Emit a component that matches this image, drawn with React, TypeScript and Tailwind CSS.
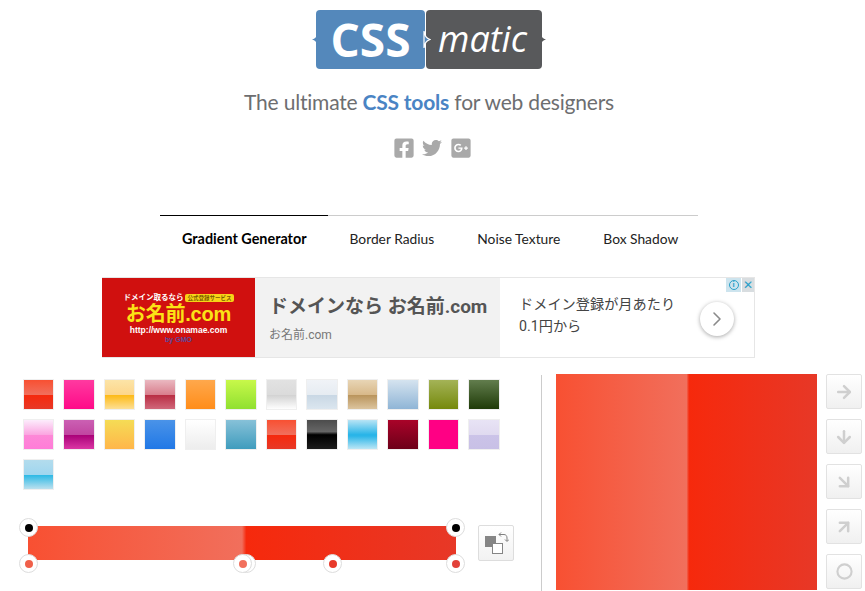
import React from "react";
import { ArrowDownRight, ArrowDown, ArrowRight, ArrowUpRight, ChevronRight, Circle } from "lucide-react";
import { FaFacebookSquare, FaGooglePlusSquare, FaTwitter } from "react-icons/fa";

const swatches = [
  "bg-[linear-gradient(to_bottom,#f85032_0%,#f16f5c_50%,#f6290c_51%,#f02f17_71%,#e73827_100%)]",
  "bg-[linear-gradient(to_bottom,#ff3aa0_0%,#ff0a88_100%)]",
  "bg-[linear-gradient(to_bottom,#fce4a7_0%,#fdd68b_50%,#fdb913_51%,#fddf94_100%)]",
  "bg-[linear-gradient(to_bottom,#eab8c0_0%,#d97f8e_50%,#b82c42_51%,#d0677a_100%)]",
  "bg-[linear-gradient(to_bottom,#ffa84c_0%,#ff8d1a_100%)]",
  "bg-[linear-gradient(to_bottom,#c8f84a_0%,#90e030_100%)]",
  "bg-[linear-gradient(to_bottom,#e2e2e2_0%,#dbdbdb_50%,#d1d1d1_51%,#fefefe_100%)]",
  "bg-[linear-gradient(to_bottom,#f0f3f7_0%,#e6ecf2_50%,#c8d7e4_51%,#dbe6ef_100%)]",
  "bg-[linear-gradient(to_bottom,#e8d5b5_0%,#d8b98a_50%,#b8935a_51%,#dcc49e_100%)]",
  "bg-[linear-gradient(to_bottom,#d5e3ef_0%,#8fb5d6_100%)]",
  "bg-[linear-gradient(to_bottom,#a4b357_0%,#75890c_100%)]",
  "bg-[linear-gradient(to_bottom,#627d4d_0%,#1f3b08_100%)]",
  "bg-[linear-gradient(to_bottom,#fcecfc_0%,#fba6e1_50%,#fd89d7_51%,#ff7cd8_100%)]",
  "bg-[linear-gradient(to_bottom,#cb60b3_0%,#c146a1_50%,#a80077_51%,#db36a4_100%)]",
  "bg-[linear-gradient(to_bottom,#f5dc55_0%,#ffb64a_100%)]",
  "bg-[linear-gradient(to_bottom,#4a93e8_0%,#2178e6_100%)]",
  "bg-[linear-gradient(to_bottom,#ffffff_0%,#ededed_100%)]",
  "bg-[linear-gradient(to_bottom,#87c1d8_0%,#3f9cbd_100%)]",
  "bg-[linear-gradient(to_bottom,#f85032_0%,#f16f5c_50%,#f6290c_51%,#f02f17_71%,#e73827_100%)]",
  "bg-[linear-gradient(to_bottom,#4c4c4c_0%,#666666_40%,#000000_51%,#1c1c1c_100%)]",
  "bg-[linear-gradient(to_bottom,#b8e4f5_0%,#2ab5e8_50%,#2ab5e8_55%,#bce6f5_100%)]",
  "bg-[linear-gradient(to_bottom,#a90329_0%,#6d0019_100%)]",
  "bg-[#ff0084]",
  "bg-[linear-gradient(to_bottom,#e8e3f5_0%,#e0daf0_50%,#cbc3e8_51%,#c8c0e6_100%)]",
  "bg-[linear-gradient(to_bottom,#b3dced_0%,#a0d6ef_50%,#29b8e5_51%,#bce0ee_100%)]",
];

const directions = [ArrowRight, ArrowDown, ArrowDownRight, ArrowUpRight, Circle];

const Handle = ({ className, dot }: { className: string; dot: string }) => (
  <div className={`absolute w-[19px] h-[19px] rounded-full bg-white border border-[#ddd] flex items-center justify-center ${className}`}>
    <div className={`w-[8px] h-[8px] rounded-full ${dot}`}></div>
  </div>
);

const Logo = () => (
  <div className="relative mr-[7px] flex h-[59px] w-[226px]">
    <div className="w-[109px] bg-[#5488bb] rounded-[4px] flex items-center justify-center text-white text-[46px] font-bold font-['Open_Sans',sans-serif]">
      CSS
    </div>
    <div className="ml-px w-[116px] bg-[#58595b] rounded-[4px] pl-[12px] pb-[2px] flex items-center text-white text-[36px] italic font-['Open_Sans',sans-serif] font-normal">
      matic
    </div>
    {/* little brace bumps on the logo */}
    <svg className="absolute left-[-4px] top-[24px]" width="5" height="11" viewBox="0 0 5 11">
      <path d="M5 0 C5 3 3 4.5 0 5.5 C3 6.5 5 8 5 11 Z" fill="#5488bb" />
    </svg>
    <svg className="absolute left-[107px] top-[21px]" width="8" height="17" viewBox="0 0 8 17">
      <path d="M1 0 C2 5 3 7 7 8.5 C3 10 2 12 1 17 Z" fill="#5488bb" stroke="#fff" strokeWidth="1.2" />
    </svg>
    <svg className="absolute left-[225px] top-[24px]" width="5" height="11" viewBox="0 0 5 11">
      <path d="M0 0 C0 3 2 4.5 5 5.5 C2 6.5 0 8 0 11 Z" fill="#58595b" />
    </svg>
  </div>
);

const AdLogo = () => (
  <div className="w-[153px] bg-[#d0100f] flex flex-col items-center justify-center pt-[2px] font-['Liberation_Sans','Noto_Sans_CJK_JP',sans-serif] font-bold">
    <div className="flex items-center gap-[2px] text-[7.5px] leading-[10px] text-white">
      ドメイン取るなら
      <span className="bg-[#f7d417] text-[#7a5a00] text-[5.5px] leading-[8px] px-[2px] rounded-[2px]">公式登録サービス</span>
    </div>
    <div className="text-[#fbe216] text-[20px] leading-[22px] tracking-[-0.2px]">お名前.com</div>
    <div className="text-white text-[8.5px] leading-[10px]">http://www.onamae.com</div>
    <div className="text-[#5b4a9e] text-[7px] leading-[9px]">by GMO</div>
  </div>
);

export default function App() {
  return (
    <div className="w-[865px] h-[591px] overflow-hidden bg-white font-['Lato',sans-serif]">
      <div className="flex flex-col items-center pt-[10px]">
        <Logo />
        <h1 className="mt-[18px] mr-[7px] text-[21px] tracking-[-0.2px] leading-[30px] text-[#6d6e70]">
          The ultimate <strong className="font-bold text-[#4a84c4]">CSS tools</strong> for web designers
        </h1>
        <div className="mt-[20px] flex items-center h-[22px] text-[#a9a9a9]">
          <FaFacebookSquare size={22} />
          <FaTwitter size={20} className="ml-[7px]" />
          <FaGooglePlusSquare size={22} className="ml-[8px]" />
        </div>
      </div>

      {/* tabs */}
      <div className="mt-[56px] ml-[160px] w-[538px] flex text-[13.8px] leading-[20px] text-[#222]">
        <div className="w-[168px] border-t border-black pl-[22px] pt-[13px] text-[14.4px] font-bold text-black">Gradient Generator</div>
        <div className="border-t border-[#ccc] px-[21.5px] pt-[13px]">Border Radius</div>
        <div className="border-t border-[#ccc] px-[21.5px] pt-[13px]">Noise Texture</div>
        <div className="border-t border-[#ccc] flex-1 pl-[21.5px] pt-[13px]">Box Shadow</div>
      </div>

      {/* ad */}
      <div className="relative mt-[28px] ml-[102px] w-[653px] h-[81px] flex border-y border-r border-[#e6e6e6] font-['Roboto','Noto_Sans_CJK_JP',sans-serif]">
        <AdLogo />
        <div className="w-[245px] bg-[#f2f2f2] pl-[14px] pt-[16px]">
          <div className="text-[19px] leading-[26px] font-bold text-[#555]">ドメインなら お名前.com</div>
          <div className="mt-[7px] text-[12px] leading-[16px] text-[#777]">お名前.com</div>
        </div>
        <div className="flex-1 pl-[19px] pt-[15px] text-[14.2px] leading-[22px] text-[#444]">
          <div>ドメイン登録が月あたり</div>
          <div>0.1円から</div>
        </div>
        <div className="absolute right-[20px] top-[24px] w-[34px] h-[34px] rounded-full bg-white shadow-[0_1px_4px_rgba(0,0,0,0.35)] flex items-center justify-center text-[#8a8a8a]">
          <ChevronRight size={24} strokeWidth={1.6} />
        </div>
        <div className="absolute right-0 top-0 h-[14px] flex text-[#2aa0c8]">
          <div className="w-[15px] bg-[#cde4ee] flex items-center justify-center">
            <div className="w-[10px] h-[10px] rounded-full border border-[#2aa0c8] text-[8px] leading-[8px] text-center font-bold">i</div>
          </div>
          <div className="ml-px w-[12px] bg-[#d8dde0] text-[12px] leading-[14px] text-center">✕</div>
        </div>
      </div>

      {/* generator */}
      <div className="mt-[16px] pl-[22.5px] flex">
        <div className="w-[518.5px] pt-[4.5px]">
          <div className="grid grid-cols-[repeat(12,31.5px)] gap-x-[9px] gap-y-[8.5px]">
            {swatches.map((s, i) => (
              <div key={i} className={`h-[31.5px] border border-[#efefef] ${s}`}></div>
            ))}
          </div>
          <div className="mt-[36px] flex">
            <div className="relative ml-[5.5px] w-[428px] h-[34px] bg-[linear-gradient(to_right,#f85032_0%,#f16f5c_50%,#f6290c_51%,#f02f17_71%,#e73827_100%)]">
              <Handle className="left-[-9px] top-[-8px]" dot="bg-black" />
              <Handle className="right-[-9px] top-[-8px]" dot="bg-black" />
              <Handle className="left-[-9px] top-[28px]" dot="bg-[#f0604a]" />
              <Handle className="left-[209px] top-[28px]" dot="bg-[#f16f5c]" />
              <Handle className="left-[205px] top-[28px]" dot="bg-[#f16f5c]" />
              <Handle className="left-[295px] top-[28px]" dot="bg-[#e8392a]" />
              <Handle className="right-[-9px] top-[28px]" dot="bg-[#e2413a]" />
            </div>
            <button className="ml-[22px] mt-[-1px] w-[36px] h-[36px] rounded-[2px] border border-[#ddd] bg-[linear-gradient(to_bottom,#ffffff,#f2f2f2)] relative">
              <div className="absolute left-[6px] top-[10px] w-[11px] h-[11px] bg-[#858585]"></div>
              <div className="absolute left-[13px] top-[17px] w-[11px] h-[11px] bg-white border border-[#858585]"></div>
              <svg className="absolute left-[19px] top-[6px]" width="11" height="11" viewBox="0 0 11 11" fill="none" stroke="#808080" strokeWidth="1">
                <path d="M1 2.5 H6 C8 2.5 9 4 9 6 V9" />
                <path d="M3 0.5 L1 2.5 L3 4.5" />
                <path d="M7 7.5 L9 9.5 L11 7.5" />
              </svg>
            </button>
          </div>
        </div>
        <div className="w-px h-[216px] mt-px bg-[#ccc]"></div>
        <div className="ml-[14px] w-[261px] h-[216px] bg-[linear-gradient(to_right,#f85032_0%,#f16f5c_50%,#f6290c_51%,#f02f17_71%,#e73827_100%)]"></div>
        <div className="ml-[9px] flex flex-col gap-[10px]">
          {directions.map((Icon, i) => (
            <button key={i} className="w-[36px] h-[35px] rounded-[2px] border border-[#e2e2e2] bg-[linear-gradient(to_bottom,#ffffff,#f0f0f0)] flex items-center justify-center text-[#cfcfcf]">
              <Icon size={i === 4 ? 17 : 20} strokeWidth={3} />
            </button>
          ))}
        </div>
      </div>
    </div>
  );
}
